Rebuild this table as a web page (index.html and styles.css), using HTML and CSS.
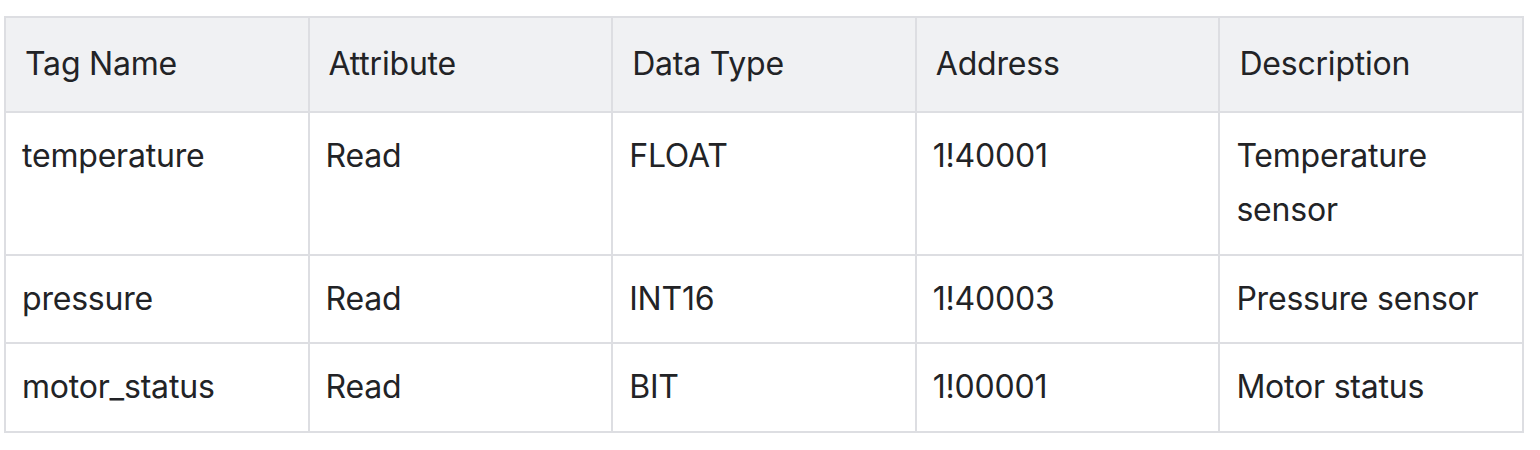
FILE: index.html
```html
<!DOCTYPE html>
<html>
<head>
<meta charset="utf-8">
<link rel="stylesheet" href="styles.css">
</head>
<body>
<div class="wrap">
<table class="tags">
  <thead>
    <tr><th>Tag Name</th><th>Attribute</th><th>Data Type</th><th>Address</th><th>Description</th></tr>
  </thead>
  <tbody>
    <tr><td>temperature</td><td>Read</td><td>FLOAT</td><td>1!40001</td><td>Temperature sensor</td></tr>
    <tr><td>pressure</td><td>Read</td><td>INT16</td><td>1!40003</td><td>Pressure sensor</td></tr>
    <tr><td>motor_status</td><td>Read</td><td>BIT</td><td>1!00001</td><td>Motor status</td></tr>
  </tbody>
</table>
</div>
</body>
</html>
```
FILE: styles.css
```css
html, body {
  margin: 0;
  padding: 0;
  background: #ffffff;
}
.wrap {
  padding: 16px 16px 0 4px;
}
.tags {
  width: 1520px;
  border-collapse: collapse;
  table-layout: fixed;
  font-family: Inter, "Noto Sans", sans-serif;
  font-size: 32px;
  letter-spacing: -0.2px;
  line-height: 54.4px;
  color: #222326;
}
.tags th, .tags td {
  border: 2px solid #dddee2;
  text-align: left;
  vertical-align: top;
}
.tags th {
  background: #f0f1f3;
  font-weight: 400;
  padding: 19.3px 19px 19.3px;
}
.tags td {
  padding: 16px 16px 16px;
}
```
